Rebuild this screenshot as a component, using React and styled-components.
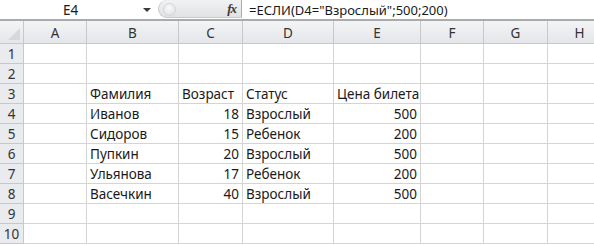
import React from 'react'
import styled, { createGlobalStyle } from 'styled-components'

const GlobalStyle = createGlobalStyle`
  html, body {
    margin: 0;
    padding: 0;
    background: #fff;
    overflow: hidden;
  }
`

const columns = [
  { name: 'A', width: 63 },
  { name: 'B', width: 92 },
  { name: 'C', width: 64 },
  { name: 'D', width: 91 },
  { name: 'E', width: 87 },
  { name: 'F', width: 63 },
  { name: 'G', width: 64 },
  { name: 'H', width: 64 },
]

const data = {
  3: { B: 'Фамилия', C: 'Возраст', D: 'Статус', E: 'Цена билета' },
  4: { B: 'Иванов', C: 18, D: 'Взрослый', E: 500 },
  5: { B: 'Сидоров', C: 15, D: 'Ребенок', E: 200 },
  6: { B: 'Пупкин', C: 20, D: 'Взрослый', E: 500 },
  7: { B: 'Ульянова', C: 17, D: 'Ребенок', E: 200 },
  8: { B: 'Васечкин', C: 40, D: 'Взрослый', E: 500 },
}

const rows = [1, 2, 3, 4, 5, 6, 7, 8, 9, 10]

export default function App() {
  const template = `24px ${columns.map((c) => c.width + 'px').join(' ')}`
  return (
    <Window>
      <GlobalStyle />
      <FormulaBar>
        <NameBox>E4</NameBox>
        <DropArrow />
        <FxBox>
          <Knob />
          <Fx>fx</Fx>
        </FxBox>
        <FormulaInput>=ЕСЛИ(D4="Взрослый";500;200)</FormulaInput>
      </FormulaBar>
      <Sheet style={{ gridTemplateColumns: template }}>
        <Corner>
          <CornerMark />
        </Corner>
        {columns.map((c) => (
          <ColHeader key={c.name}>{c.name}</ColHeader>
        ))}
        {rows.map((r) => (
          <React.Fragment key={r}>
            <RowHeader>{r}</RowHeader>
            {columns.map((c) => {
              const v = data[r] && data[r][c.name]
              return (
                <Cell key={c.name} $numeric={typeof v === 'number'}>
                  {v}
                </Cell>
              )
            })}
          </React.Fragment>
        ))}
      </Sheet>
    </Window>
  )
}

const Window = styled.div`
  width: 594px;
  height: 246px;
  overflow: hidden;
  font-family: 'Noto Sans', 'Liberation Sans', sans-serif;
  color: #1a1a1a;
`

const FormulaBar = styled.div`
  display: flex;
  align-items: stretch;
  height: 19px;
  border-bottom: 2px solid #a9abad;
  background: #fff;
`

const NameBox = styled.div`
  width: 141px;
  display: flex;
  align-items: center;
  justify-content: center;
  font-size: 13.5px;
`

const DropArrow = styled.div`
  width: 17px;
  display: flex;
  align-items: center;
  justify-content: flex-start;
  &::before {
    content: '';
    margin-left: 2px;
    border-left: 4px solid transparent;
    border-right: 4px solid transparent;
    border-top: 4px solid #3a3a3a;
  }
`

const FxBox = styled.div`
  position: relative;
  width: 84px;
  height: 18px;
  border-radius: 9px 0 0 9px;
  background: linear-gradient(#f1f2f3, #e0e2e4);
  border: 1px solid #c7c9cc;
  border-right-color: #a9abad;
  border-top: none;
  box-sizing: border-box;
  display: flex;
  align-items: center;
  justify-content: flex-end;
  padding-right: 5px;
`

const Knob = styled.div`
  position: absolute;
  left: 4px;
  top: 3px;
  width: 11px;
  height: 11px;
  border-radius: 50%;
  background: radial-gradient(circle at 45% 35%, #fafafa, #dcdee0);
  border: 1px solid #d2d4d7;
`

const Fx = styled.span`
  font-family: 'Liberation Serif', serif;
  font-style: italic;
  font-weight: bold;
  font-size: 13px;
  color: #3a3a3a;
  letter-spacing: -1px;
`

const FormulaInput = styled.div`
  flex: 1;
  display: flex;
  align-items: center;
  padding-left: 7px;
  font-size: 13px;
  white-space: nowrap;
`

const Sheet = styled.div`
  display: grid;
  grid-auto-rows: 20px;
  grid-template-rows: 23px;
`

const HeaderBase = styled.div`
  box-sizing: border-box;
  background: linear-gradient(#f3f4f6, #e4e6e9);
  border-right: 1px solid #c6c8cb;
  border-bottom: 1px solid #c6c8cb;
  color: #333;
  font-size: 13.5px;
  display: flex;
  align-items: center;
  justify-content: center;
`

const Corner = styled(HeaderBase)`
  position: relative;
`

const CornerMark = styled.div`
  position: absolute;
  right: 3px;
  bottom: 3px;
  width: 0;
  height: 0;
  border-left: 12px solid transparent;
  border-bottom: 12px solid #d6d8db;
`

const ColHeader = styled(HeaderBase)`
  padding-top: 1px;
`

const RowHeader = styled(HeaderBase)`
  background: #e9ebee;
  padding-top: 1px;
`

const Cell = styled.div`
  box-sizing: border-box;
  border-right: 1px solid #d4d4d4;
  border-bottom: 1px solid #d4d4d4;
  font-size: 13.5px;
  display: flex;
  align-items: flex-end;
  justify-content: ${(p) => (p.$numeric ? 'flex-end' : 'flex-start')};
  padding: 0 3px 0 3px;
  white-space: nowrap;
  overflow: visible;
  line-height: 18px;
`
